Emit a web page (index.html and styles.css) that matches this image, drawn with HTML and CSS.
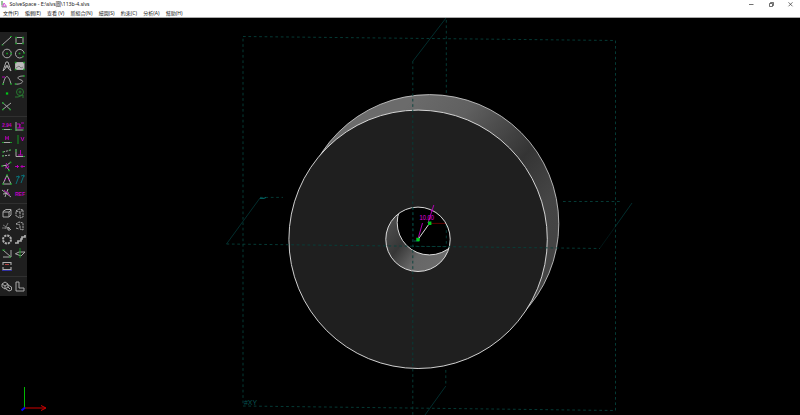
FILE: index.html
```html
<!DOCTYPE html>
<html lang="zh-Hant">
<head>
<meta charset="utf-8">
<title>SolveSpace</title>
<link rel="stylesheet" href="styles.css">
</head>
<body>
<div class="window">
<header class="top">
  <div class="titlebar">
    <svg class="logo" viewBox="0 0 6 7"><path d="M1 0V6H6" stroke="#777" stroke-width=".7" fill="none"/><path d="M1.8 5.2L3 2L5.3 5.2Z" stroke="#c3c" stroke-width=".8" fill="none"/><path d="M1 0V4" stroke="#3a3" stroke-width=".7"/></svg>
    <span class="caption">SolveSpace - E:\slvs圖\113b-4.slvs</span>
    <svg class="controls" viewBox="0 0 50 9" fill="none" stroke="#333" stroke-width=".7"><path d="M3 4.5H7.5M23.5 3.5H26.5V6.5H23.5ZM24.5 3.3V2.5H27.5V5.5H26.7M42.5 2.3L46.5 6.3M46.5 2.3L42.5 6.3"/></svg>
  </div>
  <nav class="menu"><span>文件(F)</span><span>編輯(E)</span><span>查看 (V)</span><span>新組合(N)</span><span>繪圖(S)</span><span>約束(C)</span><span>分析(A)</span><span>幫助(H)</span></nav>
</header>
<main class="stage">
<svg class="scene" viewBox="0 18 800 397" fill="none">
  <defs>
    <linearGradient id="rim" gradientUnits="userSpaceOnUse" x1="415" y1="94" x2="570" y2="220"><stop offset="0" stop-color="#6b6b6b"/><stop offset=".25" stop-color="#606060"/><stop offset=".62" stop-color="#343434"/><stop offset=".85" stop-color="#454545"/><stop offset="1" stop-color="#444"/></linearGradient>
    <linearGradient id="bore" gradientUnits="userSpaceOnUse" x1="388" y1="228" x2="438" y2="266"><stop offset="0" stop-color="#4b4b4b"/><stop offset=".32" stop-color="#373737"/><stop offset=".65" stop-color="#666"/><stop offset="1" stop-color="#6b6b6b"/></linearGradient>
    <clipPath id="hole"><circle cx="418" cy="239.3" r="32.2"/></clipPath>
  </defs>
  <path class="plane" d="M446.3 20V94M563 201.5H620M260 197.4H283M445.8 370V386"/>
  <path class="edge" d="M413 61L446 18M226.5 244L260 198M615 227L632 203M445.8 386L425 415"/>
  <path class="edge far" d="M600 248L615 227"/>
  <path d="M260 198.3H264L266 197.5" stroke="#007070"/>
  <circle cx="429.6" cy="223.8" r="129.2" fill="url(#rim)" stroke="#d4d4d4" stroke-width=".8"/>
  <circle cx="418.1" cy="239.3" r="129.2" fill="#1f1f1f" stroke="#e5e5e5" stroke-width=".9"/>
  <g clip-path="url(#hole)">
    <circle cx="418" cy="239.3" r="33" fill="url(#bore)"/>
    <circle cx="429.4" cy="222.7" r="32.2" fill="#000" stroke="#eee" stroke-width=".9"/>
    <path class="plane" d="M446.3 214V246.5H413V207"/>
    <path d="M430 223.4H446" stroke="#750000" stroke-width=".8"/>
  </g>
  <circle cx="418" cy="239.3" r="32.2" stroke="#eee" stroke-width=".9"/>
  <path class="plane" d="M243 36.5L615.5 40.5V410.5L243 406ZM412.8 61V415M226.5 244L600 248.5"/>
  <path d="M414 241H419" stroke="#087070" stroke-width=".8"/>
  <path d="M418 239.5L429.6 223.2" stroke="#ddd"/>
  <path d="M418 239L422.5 223M428 223L433.8 205M430.5 210L433.5 211" stroke="#c000c0" stroke-width=".9"/>
  <path d="M416.3 237.8h3.4v3.4h-3.4zM428 221.5h3.4v3.4h-3.4z" fill="#00cb20"/>
  <text class="dimension" x="419.5" y="220" textLength="14.5" lengthAdjust="spacingAndGlyphs">10.00</text>
  <text class="plane-name" x="244" y="405" textLength="13" lengthAdjust="spacingAndGlyphs">#XY</text>
  <path d="M24.5 387V408" stroke="#00b800"/><path d="M24.5 408H45M41 405.5L46 408L41 410.5" stroke="#d00000"/><path d="M21.5 410.5L25 407.5" stroke="#0000ff" stroke-width="2"/>
</svg>
<aside class="toolbar">
  <div class="group">
    <svg viewBox="0 0 13 13"><path d="M2 11L11 3"/><path class="g" d="M1.5 11h2M10 2.5h2"/></svg>
    <svg viewBox="0 0 13 13"><path d="M3 3.5H10V9.5H3Z"/><path class="dots" d="M3 3.5h.1M10 3.5h.1M3 9.5h.1M10 9.5h.1"/></svg>
    <svg viewBox="0 0 13 13"><circle cx="7" cy="6.5" r="4.3"/><path class="dots" d="M7 6.5h.1M11 6.5h.1"/></svg>
    <svg viewBox="0 0 13 13"><path d="M10 9.5A4.3 4.3 0 1 1 11 6"/><path class="dots" d="M6.5 6.5h.1M11 6h.1M10 9.5h.1"/></svg>
    <svg viewBox="0 0 13 13"><path d="M3 11L6 2H8L11 11L8.7 9L7 5L5 9L3 11M5 7H9"/></svg>
    <svg viewBox="0 0 13 13"><path d="M2.5 2.5H11V9.5H2.5Z" fill="#bbb"/><path d="M3 8L6 6L8 8L10 7" stroke="#777"/><path class="dots" d="M2.5 2.5h.1M11 2.5h.1M2.5 9.5h.1M11 9.5h.1"/></svg>
    <svg viewBox="0 0 13 13"><path d="M3 11C5 1 8 -1 11 10"/><path class="p" d="M2 3h3"/><path class="dots" d="M3 10h.1M11 10h.1"/></svg>
    <svg viewBox="0 0 13 13"><path d="M11 2C3 2 4 5 8 6S8 11 2 10"/><path class="dots" d="M11 2h.1M2.5 10h.1"/></svg>
    <svg viewBox="0 0 13 13"><path class="dots big" d="M7 6.5h.1"/></svg>
    <svg viewBox="0 0 13 13"><g stroke="#287c32"><circle cx="7" cy="5" r="3.5"/><circle cx="7" cy="5" r="1"/><path d="M2 10H5L10 8V11"/></g></svg>
    <svg viewBox="0 0 13 13"><path d="M2 2.5C6 5 8 8 11 10M2 10C5 8 8 5 11 3"/><path class="dots" d="M3 3h.1M3 9.5h.1M10 9.5h.1"/></svg>
  </div>
  <div class="group">
    <svg viewBox="0 0 13 13"><text x="2" y="7" textLength="9.5" lengthAdjust="spacingAndGlyphs">2.94</text><path d="M2 9.5H12"/><path class="g" d="M2 9.5h2M10 9.5h2"/></svg>
    <svg viewBox="0 0 13 13"><path d="M3 11V2M3 10H10"/><path class="p" d="M4 4H7V8H4M8 3H11M7 8H11M7 4L6 8"/><path class="g" d="M3 11V8M9 10h2"/></svg>
    <svg viewBox="0 0 13 13"><path class="p" d="M5.7 3V7M8.3 3V7M5.7 5H8.3"/><path d="M2 9.5H12"/><path class="g" d="M2 9.5h2M10 9.5h2"/></svg>
    <svg viewBox="0 0 13 13"><path class="g" d="M5 2V11"/><path class="p" d="M8 4L9.5 8L11 4"/></svg>
    <svg viewBox="0 0 13 13"><path d="M3 5L11 3M2 9L11 8" stroke-dasharray="2 1"/><path class="g" d="M2 5h2M9 3h2M2 9h2"/></svg>
    <svg viewBox="0 0 13 13"><path d="M3 2V9.5H12"/><path class="p" d="M7.5 3V8M5 8H10"/><path class="g" d="M3 2v3M10 9.5h2"/></svg>
    <svg viewBox="0 0 13 13"><path d="M2 6L7 5L11 2M5 5L9 10"/><path class="p" d="M6 3L9 7L5 8"/><path class="dots" d="M2 6h.1M10.5 2.5h.1M9 10.5h.1"/></svg>
    <svg viewBox="0 0 13 13"><path class="p" d="M2 6.5H6M7.5 6.5H12M4.5 5V8M9 5V8"/></svg>
    <svg viewBox="0 0 13 13"><path d="M7 2L3 11H11Z"/><path class="p" d="M4 6L6 7M8 7L10 6"/><path class="dots" d="M7 2h.1M3 11h.1M11 11h.1"/></svg>
    <svg viewBox="0 0 13 13"><path stroke="#08737a" d="M3 11L6 3L3 4M8 10L11 2L8 3M6 3V5M11 2V4"/></svg>
    <svg viewBox="0 0 13 13"><path d="M2 3L11 10M8 2L5 10M3 7L9 6"/><path class="p" d="M4 3L10 8"/></svg>
    <svg viewBox="0 0 13 13"><text x="2" y="8.5" textLength="10" lengthAdjust="spacingAndGlyphs">REF</text></svg>
  </div>
  <div class="group">
    <svg viewBox="0 0 13 13"><path d="M3 4.5L6 2.5H11V8L9 10H3ZM3 5H9V10M9 5L11 3"/></svg>
    <svg viewBox="0 0 13 13"><path d="M3 4L6 2L10 3V10L7 11L3 9ZM3 4L7 5L10 3M7 5V11" stroke-dasharray="2 .7"/></svg>
    <svg viewBox="0 0 13 13"><path d="M3 5L8 8M8 3L5 9M2 8H10" stroke="#777"/><path d="M8 7L11 10M8 7V10H10"/></svg>
    <svg viewBox="0 0 13 13"><path d="M3 4L6 2L10 3V10L7 9V5L3 4M3 8L6 9" stroke-dasharray="2 .7"/></svg>
    <svg viewBox="0 0 13 13"><circle cx="7" cy="6.5" r="4" stroke-width="2" stroke-dasharray="2.2 .9"/></svg>
    <svg viewBox="0 0 13 13"><path d="M2 10H5V8H8V6H9V4H12V2" stroke-width="1.7"/></svg>
    <svg viewBox="0 0 13 13"><path d="M3 3L11 10M3 10H11V3" /><path class="g" d="M2 3h3M9 10h2"/></svg>
    <svg viewBox="0 0 13 13"><path d="M2 7L6 5L12 5M3 7L8 9L12 5"/><path class="g" d="M7 1V11"/></svg>
    <svg viewBox="0 0 13 13"><path d="M3 5V2.5H11V5M3 7V9.5H11V7" stroke-width="1.1"/><path d="M5 4.5H9" stroke="#b44"/><path d="M2 10.5H12" stroke="#33a"/></svg>
  </div>
  <div class="group">
    <svg viewBox="0 0 13 13"><path d="M2 4L5 2L8 4V7L5 9L2 7ZM2 4L5 6L8 4M5 6V9M8 5L11.5 7V10L9 11L6 9M8 7L10 9"/></svg>
    <svg viewBox="0 0 13 13"><path d="M3 2H6V8H11V11H3Z"/></svg>
  </div>
</aside>
</main>
</div>
</body>
</html>
```
FILE: styles.css
```css
* { box-sizing: border-box; }
body { margin: 0; background: #000; font-family: "Noto Sans", "Noto Sans CJK TC", sans-serif; }
.window { width: 800px; height: 415px; overflow: hidden; display: flex; flex-direction: column; }
.top { height: 18px; background: #fff; border-bottom: 1px solid #aaa; flex: none; }
.titlebar { height: 9px; display: flex; align-items: center; padding-left: 1px; }
.logo { width: 6px; height: 7px; margin-right: 2.5px; }
.caption { font-size: 5.2px; letter-spacing: -.03px; line-height: 9px; color: #222; white-space: nowrap; }
.controls { width: 50px; height: 9px; margin-left: auto; margin-right: 4px; }
.menu { display: flex; gap: 6.3px; padding-left: 3px; font-size: 5px; line-height: 9px; color: #222; white-space: nowrap; }
.stage { flex: 1; display: grid; min-height: 0; }
.scene, .toolbar { grid-area: 1 / 1; }
.scene { width: 800px; height: 397px; }
.plane { stroke: #06413b; stroke-width: .9; stroke-dasharray: 2.7 2.7; }
.edge { stroke: #034040; stroke-width: .7; }
.far { stroke: #022020; }
.dimension { font: 8px "Liberation Sans", sans-serif; fill: #e000e0; }
.plane-name { font: 6.5px "Liberation Sans", sans-serif; fill: #075454; }
.toolbar { z-index: 1; width: 27px; height: 264px; margin-top: 14px; padding-top: 1.5px; padding-left: .4px; background: #1f1f1f; }
.group { display: grid; grid-template-columns: 13px 13px; grid-auto-rows: 13.35px; }
.group + .group { margin-top: 2.5px; padding-top: 3px; border-top: 1px solid #303030; }
.group svg { width: 13px; height: 13px; fill: none; stroke: #b0b0b0; stroke-width: .95; }
.group .g { stroke: #159a22; }
.group .p { stroke: #b800b8; }
.group .dots { stroke: #159a22; stroke-width: 1.6; stroke-linecap: square; }
.group .big { stroke: #00c818; stroke-width: 2.2; }
.group text { font: bold 5.5px "Liberation Sans", sans-serif; fill: #c000c0; stroke: none; }
```
